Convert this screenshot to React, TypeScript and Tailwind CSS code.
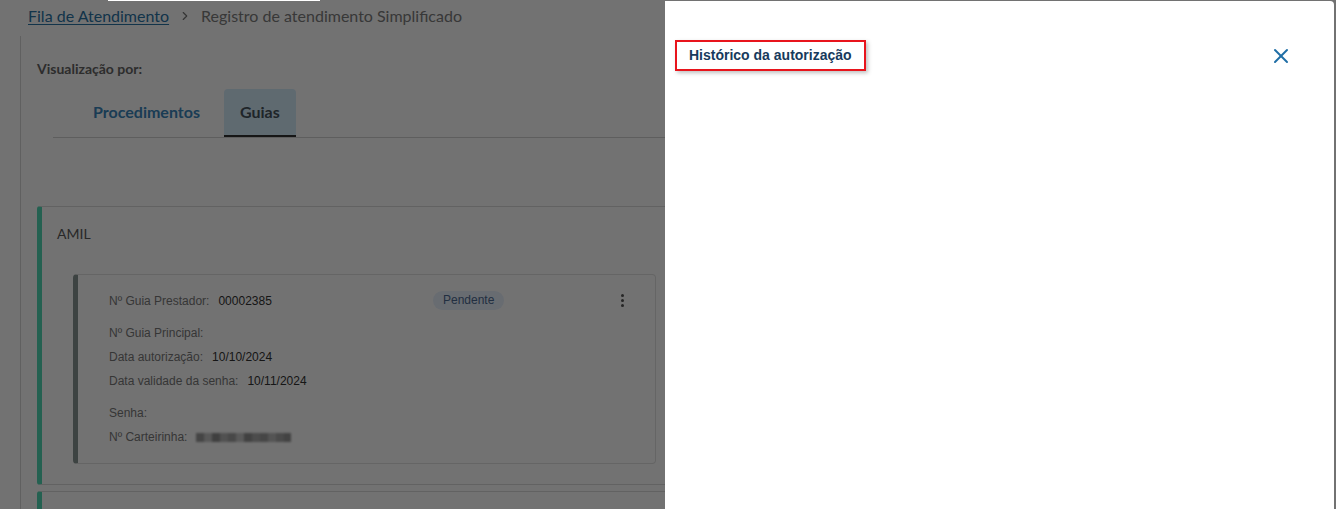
import { ChevronRight, X } from "lucide-react";

const cardRows = [
  { label: "Nº Guia Principal:", value: "", gap: "mt-[14px]" },
  { label: "Data autorização:", value: "10/10/2024", gap: "mt-[6px]" },
  { label: "Data validade da senha:", value: "10/11/2024", gap: "mt-[6px]" },
  { label: "Senha:", value: "", gap: "mt-[14px]" },
];

function BlurredValue() {
  const shades = ["#9a9a9a", "#c4c4c4", "#8e8e8e", "#b5b5b5", "#a2a2a2", "#c9c9c9", "#929292", "#aaaaaa", "#9d9d9d", "#bdbdbd", "#a5a5a5", "#969696"];
  return (
    <div className="flex h-[9px] w-[95px] blur-[1px]">
      {shades.map((c, i) => (
        <span key={i} className="h-full flex-1" style={{ backgroundColor: c }} />
      ))}
    </div>
  );
}

function GuiaCard() {
  return (
    <div className="w-[583px] rounded-[4px] border border-[#e2e2e2] border-l-[5px] border-l-[#8a9794] pl-[31px] pr-[30px] pt-[16px] pb-[17px] font-['Liberation_Sans',Arial,sans-serif] text-[12px] leading-[18px]">
      <div className="flex items-center">
        <div className="flex w-[324px] items-center">
          <span className="text-[#7a7a7a]">Nº Guia Prestador:</span>
          <span className="ml-[9px] text-[#333]">00002385</span>
        </div>
        <span className="rounded-full bg-[#e8f1fd] px-[10px] leading-[19px] text-[#4d6a92]">Pendente</span>
        <div className="ml-auto flex flex-col gap-[2px] pr-[1px]">
          <span className="h-[3px] w-[3px] rounded-full bg-[#555]" />
          <span className="h-[3px] w-[3px] rounded-full bg-[#555]" />
          <span className="h-[3px] w-[3px] rounded-full bg-[#555]" />
        </div>
      </div>
      {cardRows.map((r) => (
        <div key={r.label} className={`flex items-center ${r.gap}`}>
          <span className="text-[#7a7a7a]">{r.label}</span>
          {r.value && <span className="ml-[9px] text-[#333]">{r.value}</span>}
        </div>
      ))}
      <div className="mt-[6px] flex items-center">
        <span className="text-[#7a7a7a]">Nº Carteirinha:</span>
        <span className="ml-[9px]">
          <BlurredValue />
        </span>
      </div>
    </div>
  );
}

export default function App() {
  return (
    <div className="min-h-screen bg-white font-['Lato','Noto_Sans',sans-serif]">
      <div className="flex h-[32px] items-center pl-[28px] text-[16px]">
        <a className="text-[#2a74a6] underline underline-offset-2">Fila de Atendimento</a>
        <ChevronRight className="ml-[9px] mr-[9px] h-[14px] w-[14px] text-[#777]" strokeWidth={2} />
        <span className="text-[#7d7d7d]">Registro de atendimento Simplificado</span>
      </div>

      <div className="ml-[20px] mt-[4px] border-l border-[#d6d6d6] pl-[16px] pr-[20px]">
        <div className="pt-[24px] text-[14px] font-bold leading-[18px] text-[#666]">Visualização por:</div>

        <div className="ml-[16px] mt-[11px] flex gap-[8px] border-b border-[#d2d2d2] pl-[24px]">
          <div className="flex h-[48px] items-center border-b-2 border-transparent px-[16px] text-[16px] font-bold text-[#3b86bd]">
            Procedimentos
          </div>
          <div className="flex h-[48px] items-center rounded-t-[4px] border-b-2 border-[#333] bg-[#d4ecfb] px-[16px] text-[16px] font-bold text-[#47535d]">
            Guias
          </div>
        </div>

        <div className="mt-[68px] rounded-l-[3px] border border-[#dcdcdc] border-l-[5px] border-l-[#52d9b6] pb-[20px] pl-[15px] pt-[17px]">
          <div className="text-[14px] leading-[20px] text-[#5a5a5a]">AMIL</div>
          <div className="ml-[16px] mt-[30px]">
            <GuiaCard />
          </div>
        </div>

        <div className="mt-[6px] h-[60px] rounded-l-[3px] border border-[#dcdcdc] border-l-[5px] border-l-[#52d9b6]" />
      </div>

      <div className="fixed inset-0 bg-black/[0.553]" />
      <div className="fixed left-[108px] top-0 h-px w-[212px] bg-white" />

      <div className="fixed bottom-0 right-[2px] top-[1px] w-[669px] rounded-tr-[4px] bg-white">
        <div className="flex items-center justify-between pl-[10px] pr-[41px] pt-[39px]">
          <div className="border-2 border-[#e8141c] px-[12px] py-[5px] font-['Liberation_Sans',Arial,sans-serif] text-[14px] font-bold leading-[17px] text-[#173a5c] shadow-[2px_2px_4px_rgba(0,0,0,0.25)]">
            Histórico da autorização
          </div>
          <X className="h-6 w-6 text-[#1f6ea6]" strokeWidth={2} />
        </div>
      </div>
    </div>
  );
}
